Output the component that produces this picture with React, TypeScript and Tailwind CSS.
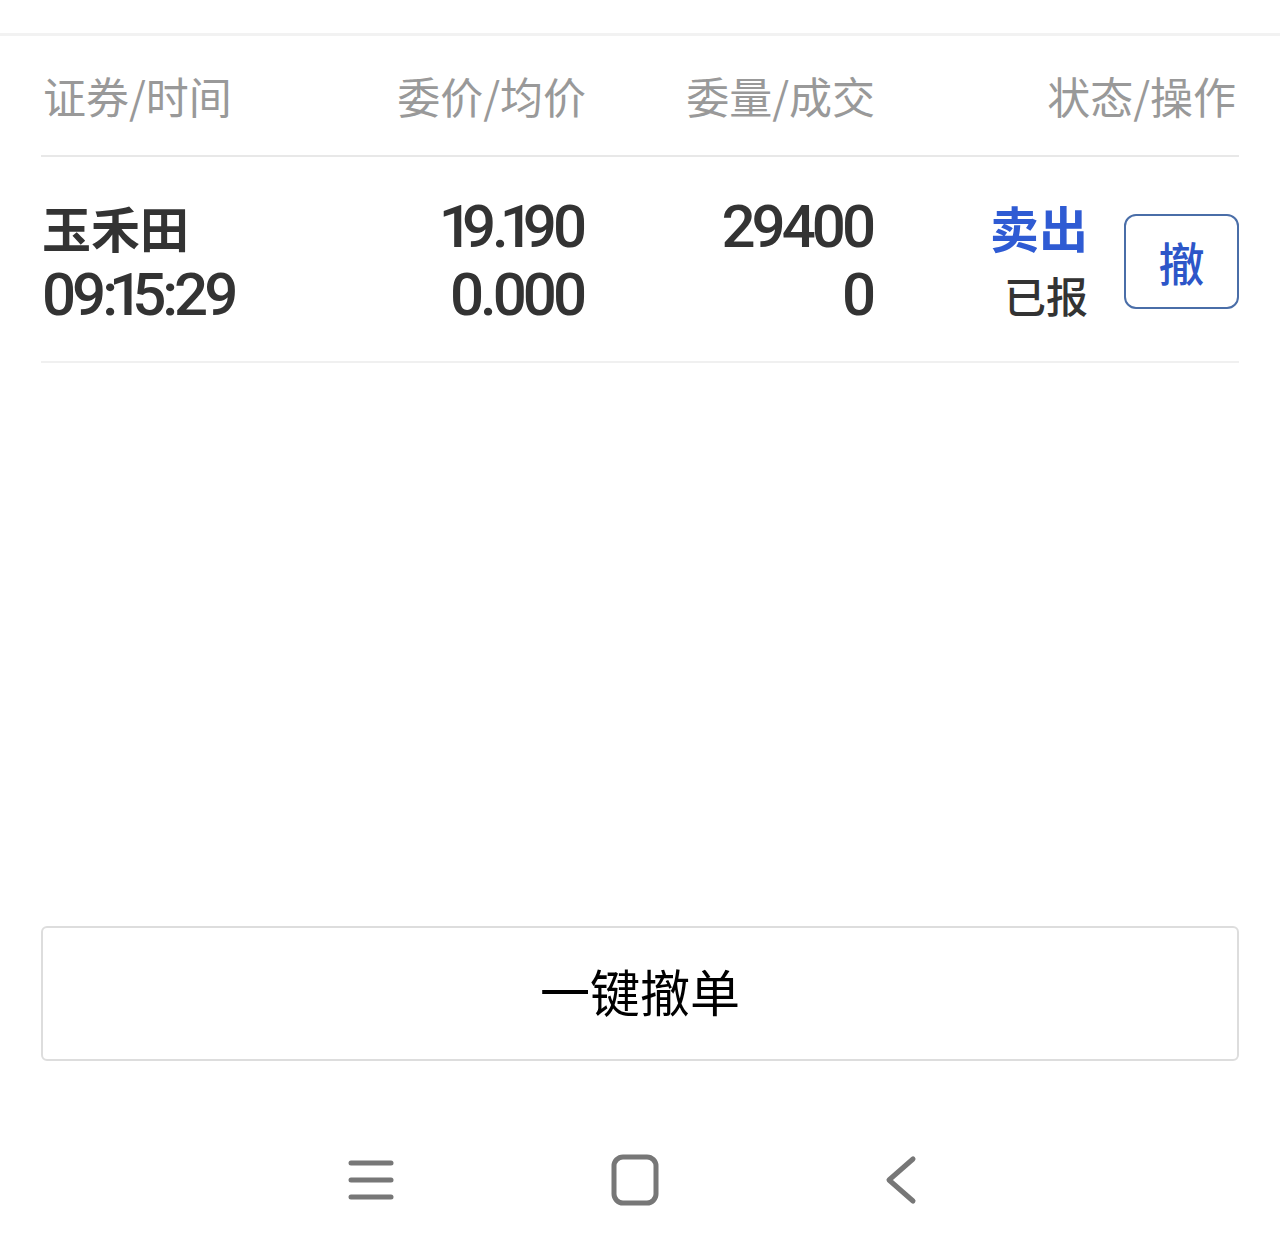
import React from "react";

const cjk = { fontFamily: '"Noto Sans CJK SC", "Noto Sans", sans-serif' };
const num = { fontFamily: 'Roboto, "Noto Sans", sans-serif' };

const HeaderCell: React.FC<{ text: string; align?: "left" | "right" }> = ({ text, align = "right" }) => (
    <div className={`text-[43px] leading-none text-[#999999] whitespace-nowrap ${align === "left" ? "text-left" : "text-right"}`}>{text}</div>
);

// the app's font has a narrow "1", so pull it in
const Num: React.FC<{ text: string }> = ({ text }) => (
    <span className="text-[60px] leading-[68px] font-medium text-[#333333] tracking-[-4px] whitespace-nowrap" style={num}>
        {text.split("").map((c, i) => c === "1"
            ? <span key={i} className="-ml-[5px] -mr-[7px]">1</span>
            : <React.Fragment key={i}>{c}</React.Fragment>)}
    </span>
);

const MenuIcon = () => (
    <svg width="48" height="44" viewBox="0 0 48 44" fill="none" stroke="#777777" strokeWidth="5" strokeLinecap="round">
        <line x1="4" y1="5" x2="44" y2="5" />
        <line x1="4" y1="22" x2="44" y2="22" />
        <line x1="4" y1="39" x2="44" y2="39" />
    </svg>
);

const HomeIcon = () => (
    <svg width="48" height="52" viewBox="0 0 48 52" fill="none" stroke="#777777" strokeWidth="5">
        <rect x="3" y="3" width="42" height="46" rx="9" />
    </svg>
);

const BackIcon = () => (
    <svg width="36" height="50" viewBox="0 0 36 50" fill="none" stroke="#777777" strokeWidth="5" strokeLinecap="round" strokeLinejoin="round">
        <path d="M30 4 L6 25 L30 46" />
    </svg>
);

export default function App() {
    return (
        <div className="w-[1280px] h-[1256px] bg-white flex flex-col" style={cjk}>
            <div className="h-[33px]"></div>
            <div className="h-[3px] bg-[#f2f2f2]"></div>

            <div className="px-[41px]">
                <div className="h-[121px] grid grid-cols-[300px_243px_289px_1fr] items-center border-b-2 border-[#e8e8e8] pr-[3px] pl-[2px]">
                    <HeaderCell text="证券/时间" align="left" />
                    <HeaderCell text="委价/均价" />
                    <HeaderCell text="委量/成交" />
                    <HeaderCell text="状态/操作" />
                </div>

                <div className="h-[206px] grid grid-cols-[300px_243px_289px_1fr] items-center border-b-2 border-[#f0f0f0] pl-[1px] pt-[4px]">
                    <div className="flex flex-col items-start">
                        <span className="text-[49px] leading-[68px] font-bold text-[#333333]">玉禾田</span>
                        <Num text="09:15:29" />
                    </div>
                    <div className="flex flex-col items-end pr-[2px]">
                        <Num text="19.190" />
                        <Num text="0.000" />
                    </div>
                    <div className="flex flex-col items-end pr-[2px]">
                        <Num text="29400" />
                        <Num text="0" />
                    </div>
                    <div className="flex items-center justify-end gap-[36px]">
                        <div className="flex flex-col items-end">
                            <span className="text-[49px] leading-[68px] font-bold text-[#2f5bd3]">卖出</span>
                            <span className="text-[42px] leading-[68px] font-medium text-[#333333]">已报</span>
                        </div>
                        <div className="w-[115px] h-[95px] border-2 border-[#4a6ea8] rounded-[12px] flex items-center justify-center">
                            <span className="text-[46px] leading-none font-medium text-[#2d56c8]">撤</span>
                        </div>
                    </div>
                </div>
            </div>

            <div className="flex-1"></div>

            <div className="px-[41px]">
                <div className="h-[135px] border-2 border-[#dddddd] rounded-[6px] flex items-center justify-center pb-[8px]">
                    <span className="text-[50px] leading-none text-black">一键撤单</span>
                </div>
            </div>

            <div className="h-[195px] flex items-start justify-center pt-[93px] pr-[14px]">
                <div className="flex items-center">
                    <div className="w-[48px] flex justify-center"><MenuIcon /></div>
                    <div className="w-[216px]"></div>
                    <div className="w-[48px] flex justify-center"><HomeIcon /></div>
                    <div className="w-[224px]"></div>
                    <div className="w-[36px] flex justify-center"><BackIcon /></div>
                </div>
            </div>
        </div>
    );
}
